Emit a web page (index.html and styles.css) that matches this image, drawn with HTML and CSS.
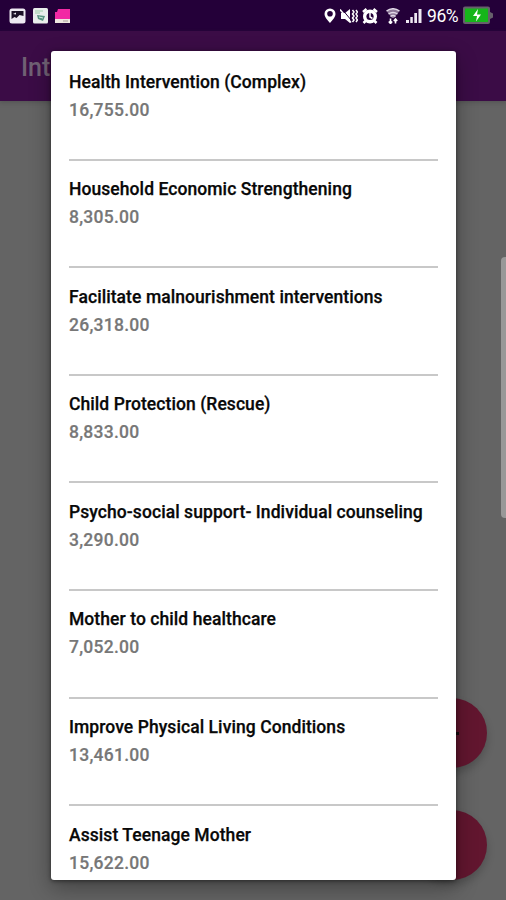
FILE: index.html
```html
<!DOCTYPE html>
<html lang="en">
<head>
<meta charset="utf-8">
<title>Interventions</title>
<link rel="stylesheet" href="styles.css">
</head>
<body>
<div class="screen">
  <header class="status">
    <div class="notifications">
      <svg width="17" height="16" viewBox="0 0 17 16"><rect x=".5" y=".5" width="16" height="15" rx="2.5" fill="#eee9f2"/><path d="M2.500 3h12v5l-4-1-3 3-2-1-3 2z" fill="#1c1027"/><path d="M4 6l3-1.500v2z" fill="#eee9f2"/></svg>
      <svg width="15" height="16" viewBox="0 0 15 16"><rect width="15" height="15.5" rx="1.5" fill="#e9eeec"/><path d="M2 3h8M2 5h5" stroke="#b5d9bf" stroke-width="1.5"/><path d="M4 7l8 1-2 5-5-2z" fill="#599482"/><path d="M6 9l4 1" stroke="#d4eee1"/></svg>
      <svg width="15" height="16" viewBox="0 0 15 16"><path d="M3 1h12v10H0V4h2z" fill="#f229a4"/><path d="M0 11h15v4H0z" fill="#eee6df"/><path d="M8 13h5" stroke="#a8a09c"/></svg>
    </div>
    <div class="indicators">
      <svg width="12" height="16" viewBox="0 0 12 16"><path fill-rule="evenodd" d="M6 .5A5.5 5.5 0 0 0 .5 6C.5 9.5 6 15 6 15s5.500-5.500 5.500-9A5.500 5.500 0 0 0 6 .5zM6 3a2.800 2.800 0 1 1 0 5.600A2.800 2.800 0 0 1 6 3z" fill="#fff"/></svg>
      <svg width="18" height="16" viewBox="0 0 18 16"><path d="M1 5h4l5-4v14l-5-4H1z" fill="#fff"/><path d="M1.500 .5l10 12" stroke="#25003a"/><path d="M0 1.500l11 13" stroke="#fff" stroke-width="1.500"/><path d="M12.500 2l1.500 2-1.500 2L14 8l-1.500 2 1.500 2-1.500 2M16 2l1.500 2L16 6l1.500 2L16 10l1.500 2-1.500 2" fill="none" stroke="#fff" stroke-width="1.500"/></svg>
      <svg class="alarm" width="16" height="16" viewBox="0 0 16 16"><circle cx="8" cy="8.500" r="7" fill="#fff"/><path d="M1 4l3.500-3M15 4l-3.500-3M3.500 13L1.500 15M12.500 13l2 2" stroke="#fff" stroke-width="2.500"/><circle cx="8" cy="8.500" r="3.600" fill="#25003a"/><path d="M8 5v4l2.500 1.500" fill="none" stroke="#fff" stroke-width="1.500"/></svg>
      <svg class="wifi" width="14" height="16" viewBox="0 0 14 16"><path d="M.5 3Q7-1.500 13.500 3L8 10H6z" fill="#8d7898"/><path d="M.5 3Q7-1.500 13.500 3M2.500 6q4.500-3 9 0M4.500 8.500q2.500-2 5 0" fill="none" stroke="#e2d9e8" stroke-width="1.500"/><path d="M4.500 10.500v5M2.800 13.500l1.700 2 1.700-2M9.500 15.500v-5M7.800 13l1.700-2 1.700 2" fill="none" stroke="#fff" stroke-width="1.600"/></svg>
      <svg class="signal" width="16" height="15" viewBox="0 0 16 15"><path d="M0 12h3v3H0zM4.300 9h2.500v6H4.300zM8.300 5h2.700v10H8.300zM12.500 1h3v14h-3z" fill="#eee8f2"/></svg>
      <span class="percent">96%</span>
      <svg class="battery" width="32" height="19" viewBox="0 0 32 19"><path d="M3 .5h23q2 0 2 2V6l3 1.500v4L28 13v3q0 2-2 2H3q-2 0-2-2V2.500q0-2 2-2z" fill="#66606b"/><path d="M3 2.500h23v13.500H3z" fill="#16b51a"/><path d="M16 3l-5 7h4l-1 5.500 5-7h-4z" fill="#fff"/></svg>
    </div>
  </header>
  <div class="appbar">Int</div>
  <div class="fab fab-upper"><span class="plus"></span></div>
  <div class="fab fab-lower"></div>
  <div class="edge-handle"></div>
  <main class="dialog">
    <section class="item"><h2>Health Intervention (Complex)</h2><p>16,755.00</p></section>
    <section class="item"><h2>Household Economic Strengthening</h2><p>8,305.00</p></section>
    <section class="item"><h2>Facilitate malnourishment interventions</h2><p>26,318.00</p></section>
    <section class="item"><h2>Child Protection (Rescue)</h2><p>8,833.00</p></section>
    <section class="item"><h2>Psycho-social support- Individual counseling</h2><p>3,290.00</p></section>
    <section class="item"><h2>Mother to child healthcare</h2><p>7,052.00</p></section>
    <section class="item"><h2>Improve Physical Living Conditions</h2><p>13,461.00</p></section>
    <section class="item"><h2>Assist Teenage Mother</h2><p>15,622.00</p></section>
  </main>
</div>
</body>
</html>
```
FILE: styles.css
```css
* { box-sizing: border-box; }
body { margin: 0; font-family: Roboto, sans-serif; }
.screen { position: relative; width: 506px; height: 900px; overflow: hidden; background: #646464; }
.status { display: flex; justify-content: space-between; height: 31px; padding: 0 13px 0 9px; background: #240039; }
.notifications, .indicators { display: flex; align-items: center; height: 31px; }
.notifications { gap: 7px; }
.indicators { gap: 5px; }
.indicators > :first-child { margin-right: -1px; }
.indicators { position: relative; left: 1px; }
.alarm { margin-left: -1px; }
.wifi { margin-left: 3px; }
.signal { margin-left: 1px; }
.percent { width: 32px; margin-right: -2px; color: #fff; font-size: 17.5px; line-height: 32px; white-space: nowrap; letter-spacing: -.4px; }
.appbar { height: 70px; padding-left: 21px; background: #3b0c46; color: #706174; font-size: 25px; font-weight: 500; line-height: 73px; box-shadow: 0 2px 4px #4447; }
.dialog { position: absolute; left: 51px; top: 51px; width: 405px; height: 829px; padding: 2px 18px 0; border-radius: 3px; overflow: hidden; background: #fff; box-shadow: 0 8px 22px #0005, 0 1px 4px #0007; }
.item { height: 107.6px; padding-top: 16.5px; border-bottom: 2px solid #c8c8c8; }
.item h2, .item p { margin: 0; font-size: 17.5px; font-weight: 500; white-space: nowrap; }
.item h2 { color: #080808; line-height: 24px; letter-spacing: .07px; -webkit-text-stroke: .25px #080808; }
.item p { margin-top: 4px; color: #777; line-height: 24px; letter-spacing: .25px; -webkit-text-stroke: .2px #777; }
.fab { position: absolute; left: 417px; width: 70px; height: 70px; border-radius: 50%; background: #62162f; box-shadow: 0 5px 9px #0003; }
.fab-upper { display: flex; align-items: center; justify-content: center; top: 698px; }
.plus { width: 14px; height: 3px; background: #170c10; }
.fab-lower { top: 810px; }
.edge-handle { position: absolute; left: 501px; top: 257px; width: 10px; height: 261px; border-radius: 4px; background: #989898; }
```
